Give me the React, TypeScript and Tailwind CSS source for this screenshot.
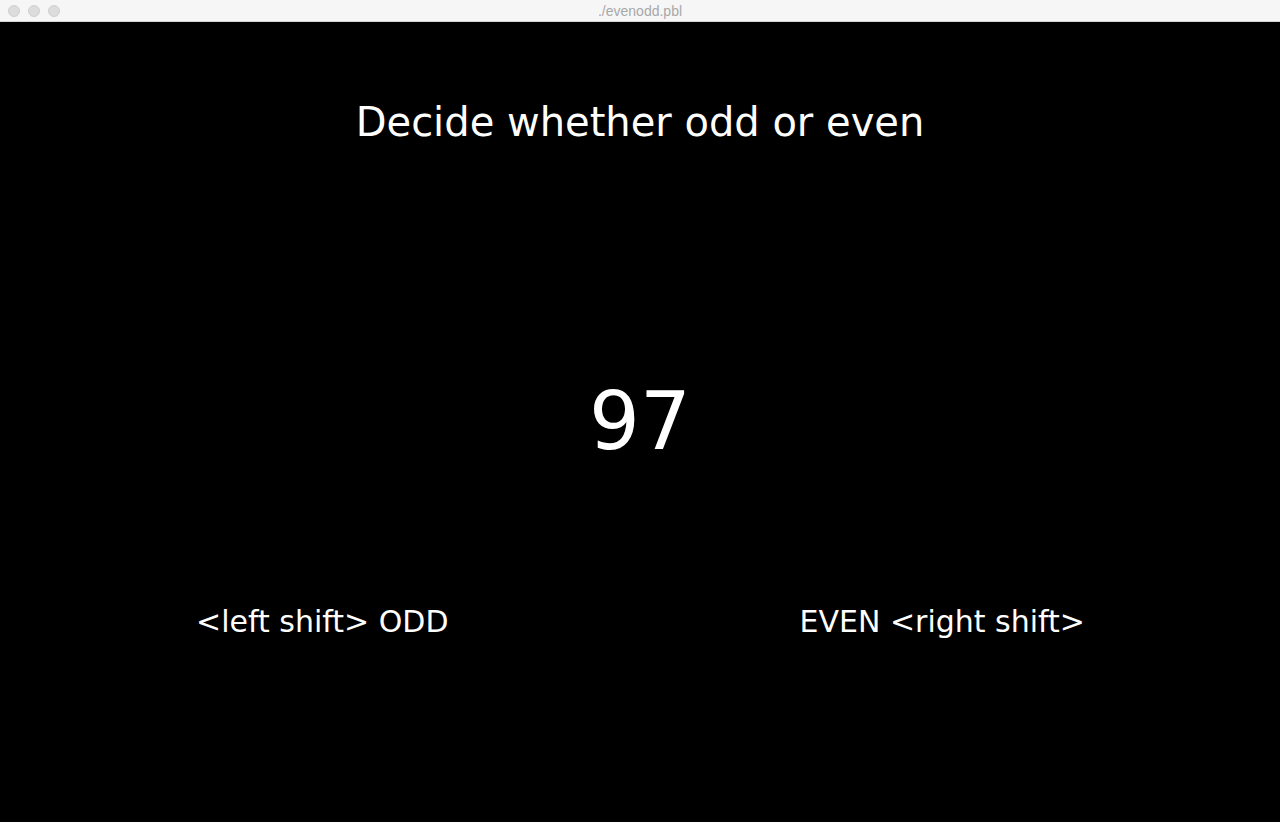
export default function App() {
  return (
    <div className="w-[1280px] h-[822px] flex flex-col bg-black overflow-hidden" style={{ fontFamily: '"DejaVu Sans", sans-serif' }}>
      {/* Title bar */}
      <div className="relative h-[22px] flex items-center justify-center bg-[#f6f6f6] border-b border-[#d4d4d4]">
        <div className="absolute left-[8px] top-[5px] flex gap-[8px]">
          <span className="w-[12px] h-[12px] rounded-full bg-[#dcdcdc] border border-[#d0d0d0]" />
          <span className="w-[12px] h-[12px] rounded-full bg-[#dcdcdc] border border-[#d0d0d0]" />
          <span className="w-[12px] h-[12px] rounded-full bg-[#dcdcdc] border border-[#d0d0d0]" />
        </div>
        <span className="text-[14px] leading-none text-[#a8a8a8]" style={{ fontFamily: '"Liberation Sans", Arial, sans-serif' }}>
          ./evenodd.pbl
        </span>
      </div>

      {/* Content */}
      <div className="flex-1 flex flex-col text-white">
        <div className="mt-[80px] text-center text-[40px] leading-none">Decide whether odd or even</div>
        <div className="mt-[240px] text-center text-[80px] leading-none">97</div>
        <div className="mt-[145px] flex justify-between pl-[196px] pr-[195px] text-[30px] leading-none">
          <span>&lt;left shift&gt; ODD</span>
          <span>EVEN &lt;right shift&gt;</span>
        </div>
      </div>
    </div>
  );
}
